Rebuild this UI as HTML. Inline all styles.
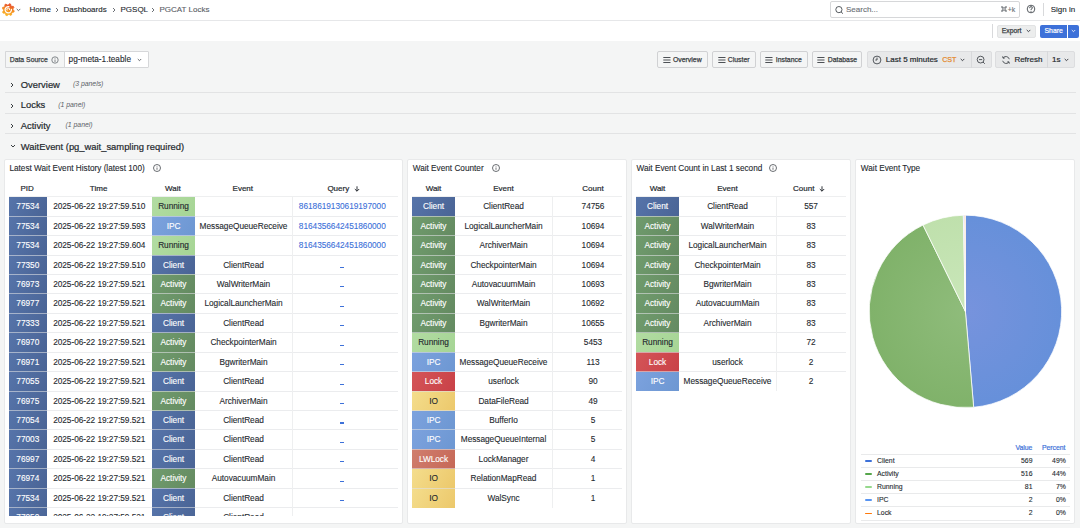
<!DOCTYPE html>
<html><head><meta charset="utf-8">
<style>
*{box-sizing:border-box}
html,body{margin:0;padding:0}
body{width:1080px;height:528px;overflow:hidden;position:relative;background:#f4f5f5;font-family:"Liberation Sans",sans-serif;color:#24292e}
.a{position:absolute}
.m{-webkit-text-stroke:0.2px #24292e}
.bt{position:absolute;top:55.2px;font-size:6.86px;line-height:9px;color:#3a3e44;-webkit-text-stroke:0.25px #3a3e44;white-space:nowrap}
.bar1{position:absolute;left:0;top:0;width:1080px;height:21px;background:#fff;border-bottom:1px solid #e6e7e9}
.bar2{position:absolute;left:0;top:21px;width:1080px;height:20px;background:#fff}
.t8{font-size:8px;line-height:10px;white-space:nowrap}
.crumb{position:absolute;top:4.7px;font-size:8px;line-height:10px;color:#24292e;white-space:nowrap;-webkit-text-stroke:0.12px currentColor}
.sep{position:absolute;top:6.6px}
.btn{position:absolute;top:51px;height:17px;border:1px solid #d0d1d3;border-radius:2px;background:#f4f5f5;font-size:6.86px;font-weight:400;-webkit-text-stroke:0.25px #3a3e44;color:#3a3e44;white-space:nowrap;line-height:15px}
.gbtn{position:absolute;top:51px;height:16.6px;background:#e8e9ea;border:1px solid #dcdddf;font-size:8px;color:#24292e;white-space:nowrap;line-height:15px}
.row{position:absolute;left:4.5px;width:1071px;height:1px;background:#e2e3e4}
.rt{position:absolute;left:20.8px;font-size:9.4px;font-weight:400;-webkit-text-stroke:0.2px #24292e;line-height:11px;color:#24292e;white-space:nowrap}
.rc{position:absolute;font-size:6.86px;font-style:italic;color:#5a5f66;white-space:nowrap;line-height:9px}
.panel{position:absolute;top:159px;height:365px;background:#fff;border:1px solid #e8e9ea;border-radius:2px}
.ptitle{position:absolute;top:163.5px;font-size:8.23px;-webkit-text-stroke:0.1px #24292e;line-height:10px;font-weight:400;color:#24292e;white-space:nowrap}
.info{position:absolute;top:164.3px;width:8px;height:8px}
.th{position:absolute;top:184px;font-size:8px;line-height:10px;font-weight:400;-webkit-text-stroke:0.2px #24292e;color:#24292e;text-align:center;white-space:nowrap}
.bc{position:absolute;height:18.44px;font-size:8.3px;letter-spacing:-0.04px;-webkit-text-stroke:0.12px currentColor;line-height:18.44px;text-align:center;white-space:nowrap;overflow:hidden}
.tc{position:absolute;height:18.44px;font-size:8.3px;letter-spacing:-0.04px;-webkit-text-stroke:0.1px currentColor;line-height:18.44px;text-align:center;white-space:nowrap;color:#24292e}
.lk{color:#3d71d9}
.hl{position:absolute;height:1px;background:#eeeff0}
.hl2{position:absolute;height:1px;background:rgba(222,224,227,0.6)}
.vl{position:absolute;width:1px;background:#eeeff0}
.clip1{position:absolute;left:0;top:0;width:1080px;height:515.6px;overflow:hidden}
.lg{position:absolute;font-size:6.86px;line-height:9px;white-space:nowrap;color:#24292e;-webkit-text-stroke:0.1px #24292e}
.lgl{position:absolute;left:860.6px;width:209.4px;height:1px;background:#e9eaeb}
</style></head><body>
<!-- top bar 1 -->
<div class="bar1"></div>
<svg class="a" style="left:2px;top:3px" width="12.5" height="13.5" viewBox="0 0 24 26">
 <defs><linearGradient id="lg1" x1="0" y1="1" x2="0.3" y2="0"><stop offset="0" stop-color="#fbc02d"/><stop offset="0.55" stop-color="#f6921e"/><stop offset="1" stop-color="#e8532a"/></linearGradient></defs>
 <polygon points="14.34,1.44 16.56,2.11 17.19,5.29 18.60,6.45 21.84,6.48 22.92,8.52 21.13,11.22 21.30,13.03 23.56,15.34 22.89,17.56 19.71,18.19 18.55,19.60 18.52,22.84 16.48,23.92 13.78,22.13 11.97,22.30 9.66,24.56 7.44,23.89 6.81,20.71 5.40,19.55 2.16,19.52 1.08,17.48 2.87,14.78 2.70,12.97 0.44,10.66 1.11,8.44 4.29,7.81 5.45,6.40 5.48,3.16 7.52,2.08 10.22,3.87 12.03,3.70" fill="url(#lg1)" stroke="url(#lg1)" stroke-width="1.6" stroke-linejoin="round"/>
 <path d="M13.2 6.9 A6.1 6.1 0 1 0 18.1 12.2" fill="none" stroke="#fff" stroke-width="2.4" stroke-linecap="round"/><path d="M9.6 13.6 A2.7 2.7 0 1 1 14.6 12.6" fill="none" stroke="#fff" stroke-width="1.9" stroke-linecap="round"/>
</svg>
<svg class="a" style="left:16.2px;top:7.8px" width="5" height="4" viewBox="0 0 5 4"><polyline points="0.7,0.9 2.5,2.7 4.3,0.9" fill="none" stroke="#6e7378" stroke-width="1"/></svg>
<div class="crumb" style="left:29.5px">Home</div>
<svg class="sep" style="left:55px" width="4" height="6" viewBox="0 0 4 6"><polyline points="1,1 3,3 1,5" fill="none" stroke="#5b6066" stroke-width="0.9"/></svg>
<div class="crumb" style="left:63.5px">Dashboards</div>
<svg class="sep" style="left:112px" width="4" height="6" viewBox="0 0 4 6"><polyline points="1,1 3,3 1,5" fill="none" stroke="#5b6066" stroke-width="0.9"/></svg>
<div class="crumb" style="left:120.5px">PGSQL</div>
<svg class="sep" style="left:150.5px" width="4" height="6" viewBox="0 0 4 6"><polyline points="1,1 3,3 1,5" fill="none" stroke="#5b6066" stroke-width="0.9"/></svg>
<div class="crumb" style="left:159.5px;color:#5b6066">PGCAT Locks</div>
<!-- search -->
<div class="a" style="left:830px;top:1px;width:189.5px;height:17px;border:1px solid #d6d7d9;border-radius:2px;background:#fff"></div>
<svg class="a" style="left:834.6px;top:5.6px" width="9" height="9" viewBox="0 0 9 9"><circle cx="3.9" cy="3.6" r="3.1" fill="none" stroke="#44494f" stroke-width="0.9"/><line x1="6.1" y1="5.9" x2="7.9" y2="7.6" stroke="#44494f" stroke-width="1"/></svg>
<div class="crumb" style="left:846px;color:#6c7177">Search...</div>
<svg class="a" style="left:1000.6px;top:6px" width="6" height="6" viewBox="0 0 6 6"><path d="M1.9 1.1V4.9M4.1 1.1V4.9M1.1 1.9H4.9M1.1 4.1H4.9" stroke="#6e7378" stroke-width="0.75" fill="none"/><circle cx="1.1" cy="1.1" r="0.8" stroke="#6e7378" stroke-width="0.7" fill="none"/><circle cx="4.9" cy="1.1" r="0.8" stroke="#6e7378" stroke-width="0.7" fill="none"/><circle cx="1.1" cy="4.9" r="0.8" stroke="#6e7378" stroke-width="0.7" fill="none"/><circle cx="4.9" cy="4.9" r="0.8" stroke="#6e7378" stroke-width="0.7" fill="none"/></svg><div class="a t8" style="left:1007.7px;top:5px;font-size:6.86px;color:#6e7378;-webkit-text-stroke:0.15px #6e7378">+k</div>
<svg class="a" style="left:1026.3px;top:4.3px" width="10" height="10" viewBox="0 0 10 10"><circle cx="5" cy="5" r="3.8" fill="none" stroke="#44494f" stroke-width="0.9"/><path d="M3.6 4.2 Q3.6 2.6 5 2.6 Q6.4 2.6 6.4 4 Q6.4 4.8 5 5.3 L5 6.2" fill="none" stroke="#44494f" stroke-width="0.9"/><circle cx="5" cy="7.4" r="0.5" fill="#44494f"/></svg>
<div class="a" style="left:1043px;top:3px;width:1px;height:12.5px;background:#d8d9db"></div>
<div class="crumb" style="left:1050.7px">Sign in</div>
<!-- bar 2 -->
<div class="bar2"></div>
<div class="a" style="left:992px;top:24px;width:1px;height:13.5px;background:#d8d9db"></div>
<div class="a" style="left:997px;top:24.5px;width:39px;height:13px;background:#eceded;border:1px solid #e2e3e4;border-radius:2px"></div>
<div class="a t8" style="left:1001.7px;top:26.3px;font-size:6.86px;color:#3a3e44;-webkit-text-stroke:0.25px #3a3e44">Export</div>
<svg class="a" style="left:1026px;top:29px" width="5" height="4" viewBox="0 0 5 4"><polyline points="0.7,0.9 2.5,2.7 4.3,0.9" fill="none" stroke="#3a3e44" stroke-width="0.95"/></svg>
<div class="a" style="left:1040px;top:24.5px;width:27px;height:13px;background:#3d71d9;border-radius:2px 0 0 2px"></div>
<div class="a" style="left:1068px;top:24.5px;width:11px;height:13px;background:#3d71d9;border-radius:0 2px 2px 0"></div>
<div class="a t8" style="left:1044.5px;top:26.3px;font-size:6.86px;color:#fff;-webkit-text-stroke:0.2px #fff">Share</div>
<svg class="a" style="left:1071px;top:29px" width="5" height="4" viewBox="0 0 5 4"><polyline points="0.8,1 2.5,2.7 4.2,1" fill="none" stroke="#fff" stroke-width="0.8"/></svg>

<!-- data source -->
<div class="a" style="left:5px;top:51px;width:144px;height:17px;border:1px solid #d6d7d9;border-radius:1px;background:#fff"></div>
<div class="a" style="left:5px;top:51px;width:59.5px;height:17px;border:1px solid #d6d7d9;border-radius:1px 0 0 1px;background:#f4f5f5"></div>
<div class="a" style="left:9.7px;top:55.3px;font-size:6.86px;line-height:9px;color:#3a3e44;-webkit-text-stroke:0.25px #3a3e44;white-space:nowrap">Data Source</div>
<svg class="a" style="left:51px;top:55.5px" width="8" height="8" viewBox="0 0 8 8"><circle cx="4" cy="4" r="3.2" fill="none" stroke="#555a60" stroke-width="0.7"/><line x1="4" y1="3.5" x2="4" y2="6" stroke="#555a60" stroke-width="0.7"/><circle cx="4" cy="2.3" r="0.45" fill="#555a60"/></svg>
<div class="a t8" style="left:68.6px;top:54.6px;color:#24292e;font-size:8.25px;-webkit-text-stroke:0.1px #24292e">pg-meta-1.teable</div>
<svg class="a" style="left:137px;top:58px" width="5" height="4" viewBox="0 0 5 4"><polyline points="0.8,1 2.5,2.7 4.2,1" fill="none" stroke="#44494f" stroke-width="0.8"/></svg>

<!-- link buttons -->
<div class="btn" style="left:657px;width:51px"></div><svg class="a" style="left:662.6px;top:57px" width="8" height="6" viewBox="0 0 8 6"><path d="M0.3 0.5H7.5M0.3 3H7.5M0.3 5.5H7.5" stroke="#3a3e44" stroke-width="0.9"/></svg><div class="bt" style="left:673px">Overview</div>
<div class="btn" style="left:712px;width:43.5px"></div><svg class="a" style="left:717.8px;top:57px" width="8" height="6" viewBox="0 0 8 6"><path d="M0.3 0.5H7.5M0.3 3H7.5M0.3 5.5H7.5" stroke="#3a3e44" stroke-width="0.9"/></svg><div class="bt" style="left:727.8px">Cluster</div>
<div class="btn" style="left:759.5px;width:48.0px"></div><svg class="a" style="left:765px;top:57px" width="8" height="6" viewBox="0 0 8 6"><path d="M0.3 0.5H7.5M0.3 3H7.5M0.3 5.5H7.5" stroke="#3a3e44" stroke-width="0.9"/></svg><div class="bt" style="left:775.8px">Instance</div>
<div class="btn" style="left:811.5px;width:50.5px"></div><svg class="a" style="left:817px;top:57px" width="8" height="6" viewBox="0 0 8 6"><path d="M0.3 0.5H7.5M0.3 3H7.5M0.3 5.5H7.5" stroke="#3a3e44" stroke-width="0.9"/></svg><div class="bt" style="left:827.8px">Database</div>

<!-- time picker -->
<div class="gbtn" style="left:866.5px;width:125px;border-radius:2px"></div>
<div class="a" style="left:971px;top:51px;width:1px;height:16.6px;background:#d8d9db"></div>
<svg class="a" style="left:871.5px;top:54.6px" width="10" height="10" viewBox="0 0 10 10"><circle cx="5" cy="5" r="3.9" fill="none" stroke="#3a3e44" stroke-width="0.85"/><polyline points="5,2.6 5,5 3.3,5" fill="none" stroke="#3a3e44" stroke-width="0.9"/></svg>
<div class="a t8 m" style="left:885.8px;top:54.8px;color:#24292e">Last 5 minutes</div>
<div class="a t8 m" style="left:942.2px;top:54.9px;color:#e4892e;font-size:7.1px;-webkit-text-stroke:0.25px #e4892e">CST</div>
<svg class="a" style="left:960.3px;top:57.8px" width="5" height="4" viewBox="0 0 5 4"><polyline points="0.7,0.9 2.5,2.7 4.3,0.9" fill="none" stroke="#3a3e44" stroke-width="0.95"/></svg>
<svg class="a" style="left:976.3px;top:54.6px" width="10" height="10" viewBox="0 0 10 10"><circle cx="4.6" cy="4.6" r="3.4" fill="none" stroke="#3a3e44" stroke-width="0.85"/><line x1="3" y1="4.6" x2="6.2" y2="4.6" stroke="#3a3e44" stroke-width="0.85"/><line x1="7" y1="7" x2="8.8" y2="8.8" stroke="#3a3e44" stroke-width="0.85"/></svg>
<div class="gbtn" style="left:995px;width:80px;border-radius:2px"></div>
<div class="a" style="left:1047px;top:51px;width:1px;height:16.6px;background:#d8d9db"></div>
<svg class="a" style="left:1000.5px;top:54.5px" width="10" height="10" viewBox="0 0 10 10"><path d="M8.3 4.2 A3.5 3.5 0 0 0 2.2 2.8" fill="none" stroke="#3a3e44" stroke-width="0.85"/><path d="M1.7 5.8 A3.5 3.5 0 0 0 7.8 7.2" fill="none" stroke="#3a3e44" stroke-width="0.85"/><polyline points="1.7,1.3 2,3.2 3.8,3" fill="none" stroke="#3a3e44" stroke-width="0.85"/><polyline points="8.3,8.7 8,6.8 6.2,7" fill="none" stroke="#3a3e44" stroke-width="0.85"/></svg>
<div class="a t8 m" style="left:1014.4px;top:54.8px;color:#24292e">Refresh</div>
<div class="a t8 m" style="left:1052px;top:54.8px;color:#24292e">1s</div>
<svg class="a" style="left:1063.5px;top:57.8px" width="5" height="4" viewBox="0 0 5 4"><polyline points="0.7,0.9 2.5,2.7 4.3,0.9" fill="none" stroke="#3a3e44" stroke-width="0.95"/></svg>

<!-- rows -->
<svg class="a" style="left:10px;top:82px" width="4" height="6" viewBox="0 0 4 6"><polyline points="1,1 3,3 1,5" fill="none" stroke="#24292e" stroke-width="0.9"/></svg>
<div class="rt" style="top:78.5px">Overview</div>
<div class="rc" style="left:72.9px;top:79px">(3 panels)</div>
<div class="row" style="top:92px"></div>
<svg class="a" style="left:10px;top:102.5px" width="4" height="6" viewBox="0 0 4 6"><polyline points="1,1 3,3 1,5" fill="none" stroke="#24292e" stroke-width="0.9"/></svg>
<div class="rt" style="top:99px">Locks</div>
<div class="rc" style="left:58.2px;top:100.2px">(1 panel)</div>
<div class="row" style="top:113px"></div>
<svg class="a" style="left:10px;top:123px" width="4" height="6" viewBox="0 0 4 6"><polyline points="1,1 3,3 1,5" fill="none" stroke="#24292e" stroke-width="0.9"/></svg>
<div class="rt" style="top:119.5px">Activity</div>
<div class="rc" style="left:65.5px;top:120px">(1 panel)</div>
<div class="row" style="top:133px"></div>
<svg class="a" style="left:9.5px;top:144px" width="6" height="4" viewBox="0 0 6 4"><polyline points="1,1 3,3 5,1" fill="none" stroke="#24292e" stroke-width="0.9"/></svg>
<div class="rt" style="top:141px">WaitEvent (pg_wait_sampling required)</div>

<!-- panels -->
<div class="panel" style="left:4px;width:399px"></div>
<div class="panel" style="left:407px;width:220px"></div>
<div class="panel" style="left:631px;width:220px"></div>
<div class="panel" style="left:855px;width:220px"></div>

<div class="ptitle" style="left:9.4px">Latest Wait Event History (latest 100)</div>
<svg class="info" style="left:153.3px" viewBox="0 0 8 8"><circle cx="4" cy="4" r="3.5" fill="none" stroke="#3a3e44" stroke-width="0.75"/><line x1="4" y1="3.5" x2="4" y2="5.8" stroke="#3a3e44" stroke-width="0.7"/><circle cx="4" cy="2.4" r="0.45" fill="#3a3e44"/></svg>
<div class="ptitle" style="left:412.7px">Wait Event Counter</div>
<svg class="info" style="left:491.8px" viewBox="0 0 8 8"><circle cx="4" cy="4" r="3.5" fill="none" stroke="#3a3e44" stroke-width="0.75"/><line x1="4" y1="3.5" x2="4" y2="5.8" stroke="#3a3e44" stroke-width="0.7"/><circle cx="4" cy="2.4" r="0.45" fill="#3a3e44"/></svg>
<div class="ptitle" style="left:636.5px">Wait Event Count in Last 1 second</div>
<svg class="info" style="left:768.5px" viewBox="0 0 8 8"><circle cx="4" cy="4" r="3.5" fill="none" stroke="#3a3e44" stroke-width="0.75"/><line x1="4" y1="3.5" x2="4" y2="5.8" stroke="#3a3e44" stroke-width="0.7"/><circle cx="4" cy="2.4" r="0.45" fill="#3a3e44"/></svg>
<div class="ptitle" style="left:860.8px">Wait Event Type</div>

<!-- table headers -->
<div class="th" style="left:8.3px;width:37.6px">PID</div>
<div class="th" style="left:45.9px;width:105.4px">Time</div>
<div class="th" style="left:151.3px;width:43px">Wait</div>
<div class="th" style="left:194.3px;width:97px">Event</div>
<div class="th" style="left:327.4px;text-align:left">Query</div><svg class="a" style="left:354px;top:185.6px" width="6" height="6" viewBox="0 0 6 6"><path d="M3 0.3V5.2M0.8 3L3 5.2L5.2 3" fill="none" stroke="#24292e" stroke-width="0.95"/></svg>
<div class="th" style="left:412px;width:43px">Wait</div>
<div class="th" style="left:455px;width:97px">Event</div>
<div class="th" style="left:552px;width:82px">Count</div>
<div class="th" style="left:636px;width:43px">Wait</div>
<div class="th" style="left:679px;width:97px">Event</div>
<div class="th" style="left:793.1px;text-align:left">Count</div><svg class="a" style="left:819.3px;top:185.6px" width="6" height="6" viewBox="0 0 6 6"><path d="M3 0.3V5.2M0.8 3L3 5.2L5.2 3" fill="none" stroke="#24292e" stroke-width="0.95"/></svg>

<div class="clip1"><div class="bc" style="left:9px;top:196.70px;width:37.6px;height:19.44px;line-height:19.44px;background:linear-gradient(120deg,#5674aa,#4a6495);color:#fff"><span style="position:relative;top:0.5px">77534</span></div><div class="tc" style="left:46.6px;top:197.20px;width:105.4px;height:19.44px;line-height:19.44px">2025-06-22 19:27:59.510</div><div class="bc" style="left:152px;top:196.70px;width:43px;height:19.44px;line-height:19.44px;background:linear-gradient(120deg,#b2dca2,#a6d595);color:#24292e"><span style="position:relative;top:0.5px">Running</span></div><div class="tc" style="left:195px;top:197.20px;width:97px;height:19.44px;line-height:19.44px"></div><div class="tc lk" style="left:292px;top:197.20px;width:100.6px;height:19.44px;line-height:19.44px">8618619130619197000</div><div class="bc" style="left:9px;top:216.14px;width:37.6px;height:19.44px;line-height:19.44px;background:linear-gradient(120deg,#5674aa,#4a6495);color:#fff"><span style="position:relative;top:0.5px">77534</span></div><div class="tc" style="left:46.6px;top:216.64px;width:105.4px;height:19.44px;line-height:19.44px">2025-06-22 19:27:59.593</div><div class="bc" style="left:152px;top:216.14px;width:43px;height:19.44px;line-height:19.44px;background:linear-gradient(120deg,#7ca2de,#6d97d2);color:#fff"><span style="position:relative;top:0.5px">IPC</span></div><div class="tc" style="left:195px;top:216.64px;width:97px;height:19.44px;line-height:19.44px">MessageQueueReceive</div><div class="tc lk" style="left:292px;top:216.64px;width:100.6px;height:19.44px;line-height:19.44px">8164356642451860000</div><div class="bc" style="left:9px;top:235.58px;width:37.6px;height:19.44px;line-height:19.44px;background:linear-gradient(120deg,#5674aa,#4a6495);color:#fff"><span style="position:relative;top:0.5px">77534</span></div><div class="tc" style="left:46.6px;top:236.08px;width:105.4px;height:19.44px;line-height:19.44px">2025-06-22 19:27:59.604</div><div class="bc" style="left:152px;top:235.58px;width:43px;height:19.44px;line-height:19.44px;background:linear-gradient(120deg,#b2dca2,#a6d595);color:#24292e"><span style="position:relative;top:0.5px">Running</span></div><div class="tc" style="left:195px;top:236.08px;width:97px;height:19.44px;line-height:19.44px"></div><div class="tc lk" style="left:292px;top:236.08px;width:100.6px;height:19.44px;line-height:19.44px">8164356642451860000</div><div class="bc" style="left:9px;top:255.02px;width:37.6px;height:19.44px;line-height:19.44px;background:linear-gradient(120deg,#5674aa,#4a6495);color:#fff"><span style="position:relative;top:0.5px">77350</span></div><div class="tc" style="left:46.6px;top:255.52px;width:105.4px;height:19.44px;line-height:19.44px">2025-06-22 19:27:59.510</div><div class="bc" style="left:152px;top:255.02px;width:43px;height:19.44px;line-height:19.44px;background:linear-gradient(120deg,#5674aa,#4a6495);color:#fff"><span style="position:relative;top:0.5px">Client</span></div><div class="tc" style="left:195px;top:255.52px;width:97px;height:19.44px;line-height:19.44px">ClientRead</div><div class="a" style="left:340.3px;top:266.92px;width:3.9px;height:1.1px;background:#3d71d9"></div><div class="bc" style="left:9px;top:274.46px;width:37.6px;height:19.44px;line-height:19.44px;background:linear-gradient(120deg,#5674aa,#4a6495);color:#fff"><span style="position:relative;top:0.5px">76973</span></div><div class="tc" style="left:46.6px;top:274.96px;width:105.4px;height:19.44px;line-height:19.44px">2025-06-22 19:27:59.521</div><div class="bc" style="left:152px;top:274.46px;width:43px;height:19.44px;line-height:19.44px;background:linear-gradient(120deg,#709c6d,#648a61);color:#fff"><span style="position:relative;top:0.5px">Activity</span></div><div class="tc" style="left:195px;top:274.96px;width:97px;height:19.44px;line-height:19.44px">WalWriterMain</div><div class="a" style="left:340.3px;top:286.36px;width:3.9px;height:1.1px;background:#3d71d9"></div><div class="bc" style="left:9px;top:293.90px;width:37.6px;height:19.44px;line-height:19.44px;background:linear-gradient(120deg,#5674aa,#4a6495);color:#fff"><span style="position:relative;top:0.5px">76977</span></div><div class="tc" style="left:46.6px;top:294.40px;width:105.4px;height:19.44px;line-height:19.44px">2025-06-22 19:27:59.521</div><div class="bc" style="left:152px;top:293.90px;width:43px;height:19.44px;line-height:19.44px;background:linear-gradient(120deg,#709c6d,#648a61);color:#fff"><span style="position:relative;top:0.5px">Activity</span></div><div class="tc" style="left:195px;top:294.40px;width:97px;height:19.44px;line-height:19.44px">LogicalLauncherMain</div><div class="a" style="left:340.3px;top:305.80px;width:3.9px;height:1.1px;background:#3d71d9"></div><div class="bc" style="left:9px;top:313.34px;width:37.6px;height:19.44px;line-height:19.44px;background:linear-gradient(120deg,#5674aa,#4a6495);color:#fff"><span style="position:relative;top:0.5px">77333</span></div><div class="tc" style="left:46.6px;top:313.84px;width:105.4px;height:19.44px;line-height:19.44px">2025-06-22 19:27:59.521</div><div class="bc" style="left:152px;top:313.34px;width:43px;height:19.44px;line-height:19.44px;background:linear-gradient(120deg,#5674aa,#4a6495);color:#fff"><span style="position:relative;top:0.5px">Client</span></div><div class="tc" style="left:195px;top:313.84px;width:97px;height:19.44px;line-height:19.44px">ClientRead</div><div class="a" style="left:340.3px;top:325.24px;width:3.9px;height:1.1px;background:#3d71d9"></div><div class="bc" style="left:9px;top:332.78px;width:37.6px;height:19.44px;line-height:19.44px;background:linear-gradient(120deg,#5674aa,#4a6495);color:#fff"><span style="position:relative;top:0.5px">76970</span></div><div class="tc" style="left:46.6px;top:333.28px;width:105.4px;height:19.44px;line-height:19.44px">2025-06-22 19:27:59.521</div><div class="bc" style="left:152px;top:332.78px;width:43px;height:19.44px;line-height:19.44px;background:linear-gradient(120deg,#709c6d,#648a61);color:#fff"><span style="position:relative;top:0.5px">Activity</span></div><div class="tc" style="left:195px;top:333.28px;width:97px;height:19.44px;line-height:19.44px">CheckpointerMain</div><div class="a" style="left:340.3px;top:344.68px;width:3.9px;height:1.1px;background:#3d71d9"></div><div class="bc" style="left:9px;top:352.22px;width:37.6px;height:19.44px;line-height:19.44px;background:linear-gradient(120deg,#5674aa,#4a6495);color:#fff"><span style="position:relative;top:0.5px">76971</span></div><div class="tc" style="left:46.6px;top:352.72px;width:105.4px;height:19.44px;line-height:19.44px">2025-06-22 19:27:59.521</div><div class="bc" style="left:152px;top:352.22px;width:43px;height:19.44px;line-height:19.44px;background:linear-gradient(120deg,#709c6d,#648a61);color:#fff"><span style="position:relative;top:0.5px">Activity</span></div><div class="tc" style="left:195px;top:352.72px;width:97px;height:19.44px;line-height:19.44px">BgwriterMain</div><div class="a" style="left:340.3px;top:364.12px;width:3.9px;height:1.1px;background:#3d71d9"></div><div class="bc" style="left:9px;top:371.66px;width:37.6px;height:19.44px;line-height:19.44px;background:linear-gradient(120deg,#5674aa,#4a6495);color:#fff"><span style="position:relative;top:0.5px">77055</span></div><div class="tc" style="left:46.6px;top:372.16px;width:105.4px;height:19.44px;line-height:19.44px">2025-06-22 19:27:59.521</div><div class="bc" style="left:152px;top:371.66px;width:43px;height:19.44px;line-height:19.44px;background:linear-gradient(120deg,#5674aa,#4a6495);color:#fff"><span style="position:relative;top:0.5px">Client</span></div><div class="tc" style="left:195px;top:372.16px;width:97px;height:19.44px;line-height:19.44px">ClientRead</div><div class="a" style="left:340.3px;top:383.56px;width:3.9px;height:1.1px;background:#3d71d9"></div><div class="bc" style="left:9px;top:391.10px;width:37.6px;height:19.44px;line-height:19.44px;background:linear-gradient(120deg,#5674aa,#4a6495);color:#fff"><span style="position:relative;top:0.5px">76975</span></div><div class="tc" style="left:46.6px;top:391.60px;width:105.4px;height:19.44px;line-height:19.44px">2025-06-22 19:27:59.521</div><div class="bc" style="left:152px;top:391.10px;width:43px;height:19.44px;line-height:19.44px;background:linear-gradient(120deg,#709c6d,#648a61);color:#fff"><span style="position:relative;top:0.5px">Activity</span></div><div class="tc" style="left:195px;top:391.60px;width:97px;height:19.44px;line-height:19.44px">ArchiverMain</div><div class="a" style="left:340.3px;top:403.00px;width:3.9px;height:1.1px;background:#3d71d9"></div><div class="bc" style="left:9px;top:410.54px;width:37.6px;height:19.44px;line-height:19.44px;background:linear-gradient(120deg,#5674aa,#4a6495);color:#fff"><span style="position:relative;top:0.5px">77054</span></div><div class="tc" style="left:46.6px;top:411.04px;width:105.4px;height:19.44px;line-height:19.44px">2025-06-22 19:27:59.521</div><div class="bc" style="left:152px;top:410.54px;width:43px;height:19.44px;line-height:19.44px;background:linear-gradient(120deg,#5674aa,#4a6495);color:#fff"><span style="position:relative;top:0.5px">Client</span></div><div class="tc" style="left:195px;top:411.04px;width:97px;height:19.44px;line-height:19.44px">ClientRead</div><div class="a" style="left:340.3px;top:422.44px;width:3.9px;height:1.1px;background:#3d71d9"></div><div class="bc" style="left:9px;top:429.98px;width:37.6px;height:19.44px;line-height:19.44px;background:linear-gradient(120deg,#5674aa,#4a6495);color:#fff"><span style="position:relative;top:0.5px">77003</span></div><div class="tc" style="left:46.6px;top:430.48px;width:105.4px;height:19.44px;line-height:19.44px">2025-06-22 19:27:59.521</div><div class="bc" style="left:152px;top:429.98px;width:43px;height:19.44px;line-height:19.44px;background:linear-gradient(120deg,#5674aa,#4a6495);color:#fff"><span style="position:relative;top:0.5px">Client</span></div><div class="tc" style="left:195px;top:430.48px;width:97px;height:19.44px;line-height:19.44px">ClientRead</div><div class="a" style="left:340.3px;top:441.88px;width:3.9px;height:1.1px;background:#3d71d9"></div><div class="bc" style="left:9px;top:449.42px;width:37.6px;height:19.44px;line-height:19.44px;background:linear-gradient(120deg,#5674aa,#4a6495);color:#fff"><span style="position:relative;top:0.5px">76997</span></div><div class="tc" style="left:46.6px;top:449.92px;width:105.4px;height:19.44px;line-height:19.44px">2025-06-22 19:27:59.521</div><div class="bc" style="left:152px;top:449.42px;width:43px;height:19.44px;line-height:19.44px;background:linear-gradient(120deg,#5674aa,#4a6495);color:#fff"><span style="position:relative;top:0.5px">Client</span></div><div class="tc" style="left:195px;top:449.92px;width:97px;height:19.44px;line-height:19.44px">ClientRead</div><div class="a" style="left:340.3px;top:461.32px;width:3.9px;height:1.1px;background:#3d71d9"></div><div class="bc" style="left:9px;top:468.86px;width:37.6px;height:19.44px;line-height:19.44px;background:linear-gradient(120deg,#5674aa,#4a6495);color:#fff"><span style="position:relative;top:0.5px">76974</span></div><div class="tc" style="left:46.6px;top:469.36px;width:105.4px;height:19.44px;line-height:19.44px">2025-06-22 19:27:59.521</div><div class="bc" style="left:152px;top:468.86px;width:43px;height:19.44px;line-height:19.44px;background:linear-gradient(120deg,#709c6d,#648a61);color:#fff"><span style="position:relative;top:0.5px">Activity</span></div><div class="tc" style="left:195px;top:469.36px;width:97px;height:19.44px;line-height:19.44px">AutovacuumMain</div><div class="a" style="left:340.3px;top:480.76px;width:3.9px;height:1.1px;background:#3d71d9"></div><div class="bc" style="left:9px;top:488.30px;width:37.6px;height:19.44px;line-height:19.44px;background:linear-gradient(120deg,#5674aa,#4a6495);color:#fff"><span style="position:relative;top:0.5px">77534</span></div><div class="tc" style="left:46.6px;top:488.80px;width:105.4px;height:19.44px;line-height:19.44px">2025-06-22 19:27:59.521</div><div class="bc" style="left:152px;top:488.30px;width:43px;height:19.44px;line-height:19.44px;background:linear-gradient(120deg,#5674aa,#4a6495);color:#fff"><span style="position:relative;top:0.5px">Client</span></div><div class="tc" style="left:195px;top:488.80px;width:97px;height:19.44px;line-height:19.44px">ClientRead</div><div class="a" style="left:340.3px;top:500.20px;width:3.9px;height:1.1px;background:#3d71d9"></div><div class="bc" style="left:9px;top:507.74px;width:37.6px;height:19.44px;line-height:19.44px;background:linear-gradient(120deg,#5674aa,#4a6495);color:#fff"><span style="position:relative;top:0.5px">77050</span></div><div class="tc" style="left:46.6px;top:508.24px;width:105.4px;height:19.44px;line-height:19.44px">2025-06-22 19:27:59.521</div><div class="bc" style="left:152px;top:507.74px;width:43px;height:19.44px;line-height:19.44px;background:linear-gradient(120deg,#5674aa,#4a6495);color:#fff"><span style="position:relative;top:0.5px">Client</span></div><div class="tc" style="left:195px;top:508.24px;width:97px;height:19.44px;line-height:19.44px">ClientRead</div><div class="a" style="left:340.3px;top:519.64px;width:3.9px;height:1.1px;background:#3d71d9"></div><div class="hl" style="left:9px;top:196px;width:389px"></div><div class="hl2" style="left:9px;top:215.64px;width:389px"></div><div class="hl2" style="left:9px;top:235.08px;width:389px"></div><div class="hl2" style="left:9px;top:254.52px;width:389px"></div><div class="hl2" style="left:9px;top:273.96px;width:389px"></div><div class="hl2" style="left:9px;top:293.40px;width:389px"></div><div class="hl2" style="left:9px;top:312.84px;width:389px"></div><div class="hl2" style="left:9px;top:332.28px;width:389px"></div><div class="hl2" style="left:9px;top:351.72px;width:389px"></div><div class="hl2" style="left:9px;top:371.16px;width:389px"></div><div class="hl2" style="left:9px;top:390.60px;width:389px"></div><div class="hl2" style="left:9px;top:410.04px;width:389px"></div><div class="hl2" style="left:9px;top:429.48px;width:389px"></div><div class="hl2" style="left:9px;top:448.92px;width:389px"></div><div class="hl2" style="left:9px;top:468.36px;width:389px"></div><div class="hl2" style="left:9px;top:487.80px;width:389px"></div><div class="hl2" style="left:9px;top:507.24px;width:389px"></div><div class="vl" style="left:292px;top:196.5px;height:319.10px"></div></div>
<div class="bc" style="left:412px;top:196.70px;width:43px;height:19.44px;line-height:19.44px;background:linear-gradient(120deg,#5674aa,#4a6495);color:#fff"><span style="position:relative;top:0.5px">Client</span></div><div class="tc" style="left:455px;top:197.20px;width:97px;height:19.44px;line-height:19.44px">ClientRead</div><div class="tc cnt" style="left:552px;top:197.20px;width:82px;height:19.44px;line-height:19.44px">74756</div><div class="bc" style="left:412px;top:216.14px;width:43px;height:19.44px;line-height:19.44px;background:linear-gradient(120deg,#709c6d,#648a61);color:#fff"><span style="position:relative;top:0.5px">Activity</span></div><div class="tc" style="left:455px;top:216.64px;width:97px;height:19.44px;line-height:19.44px">LogicalLauncherMain</div><div class="tc cnt" style="left:552px;top:216.64px;width:82px;height:19.44px;line-height:19.44px">10694</div><div class="bc" style="left:412px;top:235.58px;width:43px;height:19.44px;line-height:19.44px;background:linear-gradient(120deg,#709c6d,#648a61);color:#fff"><span style="position:relative;top:0.5px">Activity</span></div><div class="tc" style="left:455px;top:236.08px;width:97px;height:19.44px;line-height:19.44px">ArchiverMain</div><div class="tc cnt" style="left:552px;top:236.08px;width:82px;height:19.44px;line-height:19.44px">10694</div><div class="bc" style="left:412px;top:255.02px;width:43px;height:19.44px;line-height:19.44px;background:linear-gradient(120deg,#709c6d,#648a61);color:#fff"><span style="position:relative;top:0.5px">Activity</span></div><div class="tc" style="left:455px;top:255.52px;width:97px;height:19.44px;line-height:19.44px">CheckpointerMain</div><div class="tc cnt" style="left:552px;top:255.52px;width:82px;height:19.44px;line-height:19.44px">10694</div><div class="bc" style="left:412px;top:274.46px;width:43px;height:19.44px;line-height:19.44px;background:linear-gradient(120deg,#709c6d,#648a61);color:#fff"><span style="position:relative;top:0.5px">Activity</span></div><div class="tc" style="left:455px;top:274.96px;width:97px;height:19.44px;line-height:19.44px">AutovacuumMain</div><div class="tc cnt" style="left:552px;top:274.96px;width:82px;height:19.44px;line-height:19.44px">10693</div><div class="bc" style="left:412px;top:293.90px;width:43px;height:19.44px;line-height:19.44px;background:linear-gradient(120deg,#709c6d,#648a61);color:#fff"><span style="position:relative;top:0.5px">Activity</span></div><div class="tc" style="left:455px;top:294.40px;width:97px;height:19.44px;line-height:19.44px">WalWriterMain</div><div class="tc cnt" style="left:552px;top:294.40px;width:82px;height:19.44px;line-height:19.44px">10692</div><div class="bc" style="left:412px;top:313.34px;width:43px;height:19.44px;line-height:19.44px;background:linear-gradient(120deg,#709c6d,#648a61);color:#fff"><span style="position:relative;top:0.5px">Activity</span></div><div class="tc" style="left:455px;top:313.84px;width:97px;height:19.44px;line-height:19.44px">BgwriterMain</div><div class="tc cnt" style="left:552px;top:313.84px;width:82px;height:19.44px;line-height:19.44px">10655</div><div class="bc" style="left:412px;top:332.78px;width:43px;height:19.44px;line-height:19.44px;background:linear-gradient(120deg,#b2dca2,#a6d595);color:#24292e"><span style="position:relative;top:0.5px">Running</span></div><div class="tc" style="left:455px;top:333.28px;width:97px;height:19.44px;line-height:19.44px"></div><div class="tc cnt" style="left:552px;top:333.28px;width:82px;height:19.44px;line-height:19.44px">5453</div><div class="bc" style="left:412px;top:352.22px;width:43px;height:19.44px;line-height:19.44px;background:linear-gradient(120deg,#7ca2de,#6d97d2);color:#fff"><span style="position:relative;top:0.5px">IPC</span></div><div class="tc" style="left:455px;top:352.72px;width:97px;height:19.44px;line-height:19.44px">MessageQueueReceive</div><div class="tc cnt" style="left:552px;top:352.72px;width:82px;height:19.44px;line-height:19.44px">113</div><div class="bc" style="left:412px;top:371.66px;width:43px;height:19.44px;line-height:19.44px;background:linear-gradient(120deg,#d45558,#c94147);color:#fff"><span style="position:relative;top:0.5px">Lock</span></div><div class="tc" style="left:455px;top:372.16px;width:97px;height:19.44px;line-height:19.44px">userlock</div><div class="tc cnt" style="left:552px;top:372.16px;width:82px;height:19.44px;line-height:19.44px">90</div><div class="bc" style="left:412px;top:391.10px;width:43px;height:19.44px;line-height:19.44px;background:linear-gradient(120deg,#f4dd8c,#ecc86b);color:#24292e"><span style="position:relative;top:0.5px">IO</span></div><div class="tc" style="left:455px;top:391.60px;width:97px;height:19.44px;line-height:19.44px">DataFileRead</div><div class="tc cnt" style="left:552px;top:391.60px;width:82px;height:19.44px;line-height:19.44px">49</div><div class="bc" style="left:412px;top:410.54px;width:43px;height:19.44px;line-height:19.44px;background:linear-gradient(120deg,#7ca2de,#6d97d2);color:#fff"><span style="position:relative;top:0.5px">IPC</span></div><div class="tc" style="left:455px;top:411.04px;width:97px;height:19.44px;line-height:19.44px">BufferIo</div><div class="tc cnt" style="left:552px;top:411.04px;width:82px;height:19.44px;line-height:19.44px">5</div><div class="bc" style="left:412px;top:429.98px;width:43px;height:19.44px;line-height:19.44px;background:linear-gradient(120deg,#7ca2de,#6d97d2);color:#fff"><span style="position:relative;top:0.5px">IPC</span></div><div class="tc" style="left:455px;top:430.48px;width:97px;height:19.44px;line-height:19.44px">MessageQueueInternal</div><div class="tc cnt" style="left:552px;top:430.48px;width:82px;height:19.44px;line-height:19.44px">5</div><div class="bc" style="left:412px;top:449.42px;width:43px;height:19.44px;line-height:19.44px;background:linear-gradient(120deg,#d07e6e,#c66857);color:#fff"><span style="position:relative;top:0.5px">LWLock</span></div><div class="tc" style="left:455px;top:449.92px;width:97px;height:19.44px;line-height:19.44px">LockManager</div><div class="tc cnt" style="left:552px;top:449.92px;width:82px;height:19.44px;line-height:19.44px">4</div><div class="bc" style="left:412px;top:468.86px;width:43px;height:19.44px;line-height:19.44px;background:linear-gradient(120deg,#f4dd8c,#ecc86b);color:#24292e"><span style="position:relative;top:0.5px">IO</span></div><div class="tc" style="left:455px;top:469.36px;width:97px;height:19.44px;line-height:19.44px">RelationMapRead</div><div class="tc cnt" style="left:552px;top:469.36px;width:82px;height:19.44px;line-height:19.44px">1</div><div class="bc" style="left:412px;top:488.30px;width:43px;height:19.44px;line-height:19.44px;background:linear-gradient(120deg,#f4dd8c,#ecc86b);color:#24292e"><span style="position:relative;top:0.5px">IO</span></div><div class="tc" style="left:455px;top:488.80px;width:97px;height:19.44px;line-height:19.44px">WalSync</div><div class="tc cnt" style="left:552px;top:488.80px;width:82px;height:19.44px;line-height:19.44px">1</div><div class="hl" style="left:412px;top:196px;width:210px"></div><div class="hl2" style="left:412px;top:215.64px;width:210px"></div><div class="hl2" style="left:412px;top:235.08px;width:210px"></div><div class="hl2" style="left:412px;top:254.52px;width:210px"></div><div class="hl2" style="left:412px;top:273.96px;width:210px"></div><div class="hl2" style="left:412px;top:293.40px;width:210px"></div><div class="hl2" style="left:412px;top:312.84px;width:210px"></div><div class="hl2" style="left:412px;top:332.28px;width:210px"></div><div class="hl2" style="left:412px;top:351.72px;width:210px"></div><div class="hl2" style="left:412px;top:371.16px;width:210px"></div><div class="hl2" style="left:412px;top:390.60px;width:210px"></div><div class="hl2" style="left:412px;top:410.04px;width:210px"></div><div class="hl2" style="left:412px;top:429.48px;width:210px"></div><div class="hl2" style="left:412px;top:448.92px;width:210px"></div><div class="hl2" style="left:412px;top:468.36px;width:210px"></div><div class="hl2" style="left:412px;top:487.80px;width:210px"></div><div class="vl" style="left:552px;top:196.5px;height:311.24px"></div><div class="bc" style="left:636px;top:196.70px;width:43px;height:19.44px;line-height:19.44px;background:linear-gradient(120deg,#5674aa,#4a6495);color:#fff"><span style="position:relative;top:0.5px">Client</span></div><div class="tc" style="left:679px;top:197.20px;width:97px;height:19.44px;line-height:19.44px">ClientRead</div><div class="tc cnt" style="left:776px;top:197.20px;width:70px;height:19.44px;line-height:19.44px">557</div><div class="bc" style="left:636px;top:216.14px;width:43px;height:19.44px;line-height:19.44px;background:linear-gradient(120deg,#709c6d,#648a61);color:#fff"><span style="position:relative;top:0.5px">Activity</span></div><div class="tc" style="left:679px;top:216.64px;width:97px;height:19.44px;line-height:19.44px">WalWriterMain</div><div class="tc cnt" style="left:776px;top:216.64px;width:70px;height:19.44px;line-height:19.44px">83</div><div class="bc" style="left:636px;top:235.58px;width:43px;height:19.44px;line-height:19.44px;background:linear-gradient(120deg,#709c6d,#648a61);color:#fff"><span style="position:relative;top:0.5px">Activity</span></div><div class="tc" style="left:679px;top:236.08px;width:97px;height:19.44px;line-height:19.44px">LogicalLauncherMain</div><div class="tc cnt" style="left:776px;top:236.08px;width:70px;height:19.44px;line-height:19.44px">83</div><div class="bc" style="left:636px;top:255.02px;width:43px;height:19.44px;line-height:19.44px;background:linear-gradient(120deg,#709c6d,#648a61);color:#fff"><span style="position:relative;top:0.5px">Activity</span></div><div class="tc" style="left:679px;top:255.52px;width:97px;height:19.44px;line-height:19.44px">CheckpointerMain</div><div class="tc cnt" style="left:776px;top:255.52px;width:70px;height:19.44px;line-height:19.44px">83</div><div class="bc" style="left:636px;top:274.46px;width:43px;height:19.44px;line-height:19.44px;background:linear-gradient(120deg,#709c6d,#648a61);color:#fff"><span style="position:relative;top:0.5px">Activity</span></div><div class="tc" style="left:679px;top:274.96px;width:97px;height:19.44px;line-height:19.44px">BgwriterMain</div><div class="tc cnt" style="left:776px;top:274.96px;width:70px;height:19.44px;line-height:19.44px">83</div><div class="bc" style="left:636px;top:293.90px;width:43px;height:19.44px;line-height:19.44px;background:linear-gradient(120deg,#709c6d,#648a61);color:#fff"><span style="position:relative;top:0.5px">Activity</span></div><div class="tc" style="left:679px;top:294.40px;width:97px;height:19.44px;line-height:19.44px">AutovacuumMain</div><div class="tc cnt" style="left:776px;top:294.40px;width:70px;height:19.44px;line-height:19.44px">83</div><div class="bc" style="left:636px;top:313.34px;width:43px;height:19.44px;line-height:19.44px;background:linear-gradient(120deg,#709c6d,#648a61);color:#fff"><span style="position:relative;top:0.5px">Activity</span></div><div class="tc" style="left:679px;top:313.84px;width:97px;height:19.44px;line-height:19.44px">ArchiverMain</div><div class="tc cnt" style="left:776px;top:313.84px;width:70px;height:19.44px;line-height:19.44px">83</div><div class="bc" style="left:636px;top:332.78px;width:43px;height:19.44px;line-height:19.44px;background:linear-gradient(120deg,#b2dca2,#a6d595);color:#24292e"><span style="position:relative;top:0.5px">Running</span></div><div class="tc" style="left:679px;top:333.28px;width:97px;height:19.44px;line-height:19.44px"></div><div class="tc cnt" style="left:776px;top:333.28px;width:70px;height:19.44px;line-height:19.44px">72</div><div class="bc" style="left:636px;top:352.22px;width:43px;height:19.44px;line-height:19.44px;background:linear-gradient(120deg,#d45558,#c94147);color:#fff"><span style="position:relative;top:0.5px">Lock</span></div><div class="tc" style="left:679px;top:352.72px;width:97px;height:19.44px;line-height:19.44px">userlock</div><div class="tc cnt" style="left:776px;top:352.72px;width:70px;height:19.44px;line-height:19.44px">2</div><div class="bc" style="left:636px;top:371.66px;width:43px;height:19.44px;line-height:19.44px;background:linear-gradient(120deg,#7ca2de,#6d97d2);color:#fff"><span style="position:relative;top:0.5px">IPC</span></div><div class="tc" style="left:679px;top:372.16px;width:97px;height:19.44px;line-height:19.44px">MessageQueueReceive</div><div class="tc cnt" style="left:776px;top:372.16px;width:70px;height:19.44px;line-height:19.44px">2</div><div class="hl" style="left:636px;top:196px;width:210px"></div><div class="hl2" style="left:636px;top:215.64px;width:210px"></div><div class="hl2" style="left:636px;top:235.08px;width:210px"></div><div class="hl2" style="left:636px;top:254.52px;width:210px"></div><div class="hl2" style="left:636px;top:273.96px;width:210px"></div><div class="hl2" style="left:636px;top:293.40px;width:210px"></div><div class="hl2" style="left:636px;top:312.84px;width:210px"></div><div class="hl2" style="left:636px;top:332.28px;width:210px"></div><div class="hl2" style="left:636px;top:351.72px;width:210px"></div><div class="hl2" style="left:636px;top:371.16px;width:210px"></div><div class="vl" style="left:776px;top:196.5px;height:194.60px"></div>

<!-- pie -->
<svg class="a" style="left:856px;top:160px" width="219" height="364" viewBox="856 160 219 364">
 <defs><radialGradient id="gClient" gradientUnits="userSpaceOnUse" cx="965.4" cy="311.4" r="96.2"><stop offset="0" stop-color="#7793dd"/><stop offset="1" stop-color="#6690da"/></radialGradient><radialGradient id="gActivity" gradientUnits="userSpaceOnUse" cx="965.4" cy="311.4" r="96.2"><stop offset="0" stop-color="#8fbc7b"/><stop offset="1" stop-color="#80b26a"/></radialGradient><radialGradient id="gRunning" gradientUnits="userSpaceOnUse" cx="965.4" cy="311.4" r="96.2"><stop offset="0" stop-color="#cae7ba"/><stop offset="1" stop-color="#bfe0ac"/></radialGradient><radialGradient id="gIPC" gradientUnits="userSpaceOnUse" cx="965.4" cy="311.4" r="96.2"><stop offset="0" stop-color="#9cc0ff"/><stop offset="1" stop-color="#8ab8ff"/></radialGradient><radialGradient id="gLock" gradientUnits="userSpaceOnUse" cx="965.4" cy="311.4" r="96.2"><stop offset="0" stop-color="#f39a5f"/><stop offset="1" stop-color="#ef8a48"/></radialGradient></defs><path d="M965.4,311.4 L965.40,215.20 A96.2,96.2 0 0 1 973.66,407.25 Z" fill="url(#gClient)" stroke="#fff" stroke-width="0.75"/><path d="M965.4,311.4 L973.66,407.25 A96.2,96.2 0 0 1 923.00,225.05 Z" fill="url(#gActivity)" stroke="#fff" stroke-width="0.75"/><path d="M965.4,311.4 L923.00,225.05 A96.2,96.2 0 0 1 963.33,215.22 Z" fill="url(#gRunning)" stroke="#fff" stroke-width="0.75"/><path d="M965.4,311.4 L963.33,215.22 A96.2,96.2 0 0 1 964.37,215.21 Z" fill="url(#gIPC)" stroke="#fff" stroke-width="0.75"/><path d="M965.4,311.4 L964.37,215.21 A96.2,96.2 0 0 1 965.40,215.20 Z" fill="url(#gLock)" stroke="#fff" stroke-width="0.75"/>
</svg>

<!-- legend -->
<div class="lg" style="left:1015.4px;top:443.2px;color:#3d71d9;-webkit-text-stroke:0.2px #3d71d9">Value</div>
<div class="lg" style="left:1041.9px;top:443.2px;color:#3d71d9;-webkit-text-stroke:0.2px #3d71d9">Percent</div>
<div class="lgl" style="top:454px"></div>
<div class="a" style="left:865px;top:460.40px;width:7.2px;height:1.2px;background:#3d71d9;border-radius:1px"></div><div class="lg" style="left:877px;top:456.00px">Client</div><div class="lg" style="left:990px;width:42.5px;text-align:right;top:456.00px">569</div><div class="lg" style="left:1030px;width:35.8px;text-align:right;top:456.00px">49%</div><div class="lgl" style="top:467.40px"></div><div class="a" style="left:865px;top:473.43px;width:7.2px;height:1.2px;background:#56a64b;border-radius:1px"></div><div class="lg" style="left:877px;top:469.03px">Activity</div><div class="lg" style="left:990px;width:42.5px;text-align:right;top:469.03px">516</div><div class="lg" style="left:1030px;width:35.8px;text-align:right;top:469.03px">44%</div><div class="lgl" style="top:480.43px"></div><div class="a" style="left:865px;top:486.46px;width:7.2px;height:1.2px;background:#96d98d;border-radius:1px"></div><div class="lg" style="left:877px;top:482.06px">Running</div><div class="lg" style="left:990px;width:42.5px;text-align:right;top:482.06px">81</div><div class="lg" style="left:1030px;width:35.8px;text-align:right;top:482.06px">7%</div><div class="lgl" style="top:493.46px"></div><div class="a" style="left:865px;top:499.49px;width:7.2px;height:1.2px;background:#5794f2;border-radius:1px"></div><div class="lg" style="left:877px;top:495.09px">IPC</div><div class="lg" style="left:990px;width:42.5px;text-align:right;top:495.09px">2</div><div class="lg" style="left:1030px;width:35.8px;text-align:right;top:495.09px">0%</div><div class="lgl" style="top:506.49px"></div><div class="a" style="left:865px;top:512.52px;width:7.2px;height:1.2px;background:#ff780a;border-radius:1px"></div><div class="lg" style="left:877px;top:508.12px">Lock</div><div class="lg" style="left:990px;width:42.5px;text-align:right;top:508.12px">2</div><div class="lg" style="left:1030px;width:35.8px;text-align:right;top:508.12px">0%</div><div class="lgl" style="top:519.52px"></div>
</body></html>
